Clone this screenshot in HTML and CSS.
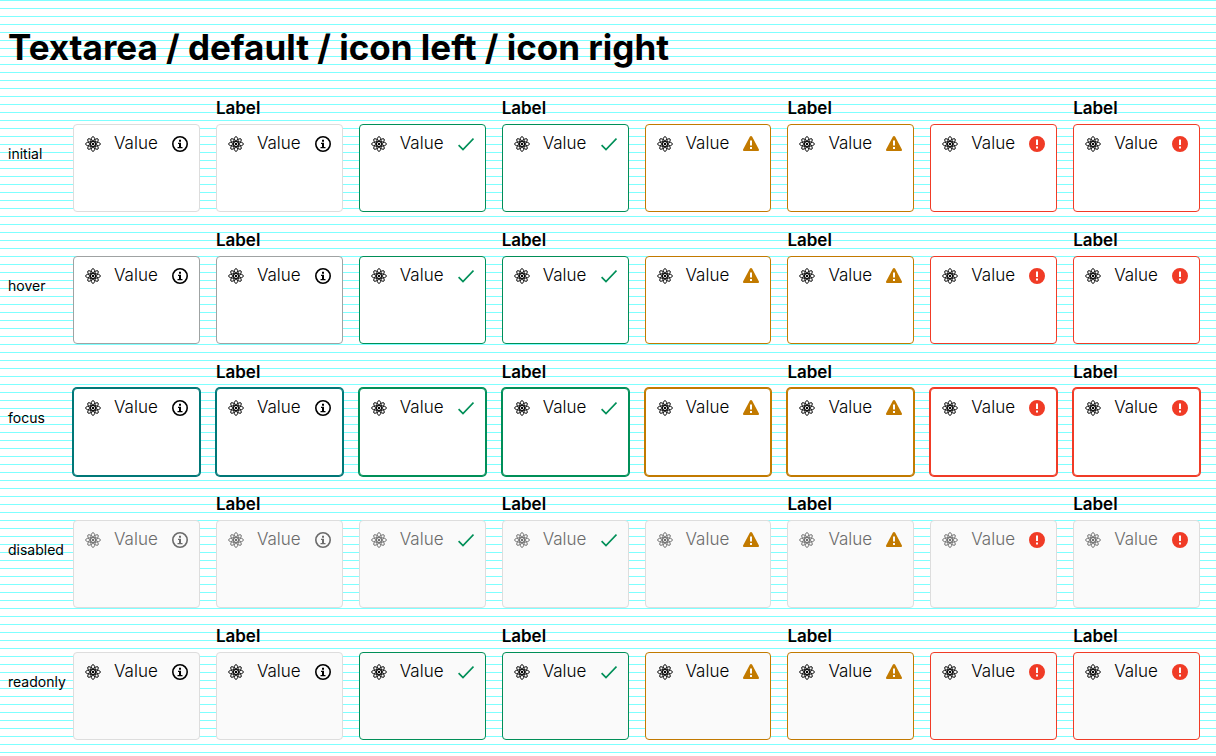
FILE: index.html
```html
<!DOCTYPE html>
<html lang="en">
<head>
  <meta charset="utf-8">
  <meta name="viewport" content="width=device-width, initial-scale=1">
  <title>Textarea / default / icon left / icon right</title>
  <link rel="stylesheet" href="styles.css">
</head>
<body>
  <svg class="sprite" aria-hidden="true">
    <symbol id="icon-atom" viewBox="0 0 16 16">
      <g fill="none" stroke="currentColor" stroke-width="0.9">
        <ellipse cx="8" cy="8" rx="7.5" ry="2.400"/>
        <ellipse cx="8" cy="8" rx="7.100" ry="2.400" transform="rotate(45 8 8)"/>
        <ellipse cx="8" cy="8" rx="7.5" ry="2.400" transform="rotate(90 8 8)"/>
        <ellipse cx="8" cy="8" rx="7.100" ry="2.400" transform="rotate(135 8 8)"/>
      </g>
      <circle cx="8" cy="8" r="1.2" fill="currentColor"/>
    </symbol>
    <symbol id="icon-info" viewBox="0 0 16 16">
      <circle cx="8" cy="8" r="7.2" fill="none" stroke="currentColor" stroke-width="1.6"/>
      <path fill="currentColor" d="M7 3.800h2v2H7zM6 6.800h3v4.200h1.500v1.200h-5V11H7V8H6z"/>
    </symbol>
    <symbol id="icon-success" viewBox="0 0 16 16">
      <path fill="none" stroke="currentColor" stroke-width="1.7" d="M.6 9.200 5 13.600 15.500 2.600"/>
    </symbol>
    <symbol id="icon-warning" viewBox="0 0 16 16">
      <path fill="currentColor" fill-rule="evenodd" d="M8 0c.5 0 .9.300 1.200.8l6.600 12.400c.5.900 0 1.900-1.100 1.900H1.300c-1.100 0-1.600-1-1.100-1.900L6.800.8C7.100.3 7.500 0 8 0zM7 4.500v5h2v-5zM7 11v2h2v-2z"/>
    </symbol>
    <symbol id="icon-error" viewBox="0 0 16 16">
      <path fill="currentColor" fill-rule="evenodd" d="M8 0a8 8 0 1 1 0 16A8 8 0 0 1 8 0zM7 3.500v5.500h2V3.500zM7 10.500v2h2v-2z"/>
    </symbol>
  </svg>

  <main class="page">
    <h1 class="title">Textarea / default / icon left / icon right</h1>
    <div class="matrix" id="matrix"></div>
  </main>
  <script src="matrix.js"></script>
</body>
</html>
```

FILE: styles.css
```css
* {
  box-sizing: border-box;
}

body {
  margin: 0;
  min-height: 100vh;
  color: #000;
  background: #fff repeating-linear-gradient(#7fffff 0 1px, #fff 1px 8px);
  font-family: Inter, "Liberation Sans", sans-serif;
  font-size: 17px;
  line-height: 24px;
}

.sprite {
  display: none;
}

.page {
  padding: 24px 16px 16px 8px;
}

.title {
  margin: 0 0 26px;
  font-size: 35px;
  font-weight: 700;
  line-height: 46px;
}

.matrix {
  display: grid;
  gap: 16px;
}

.row {
  display: flex;
  align-items: center;
}

.state {
  flex: none;
  width: 65px;
  font-size: 14px;
}

.fields {
  flex: 1;
  display: grid;
  grid-template-columns: repeat(8, minmax(0, 1fr));
  gap: 16px;
  align-items: end;
}

.label {
  display: block;
  margin-bottom: 4px;
  font-weight: 600;
}

.control {
  display: flex;
  align-items: flex-start;
  padding: 6px 11px 8px;
  border: 1px solid var(--edge);
  border-radius: 4px;
  background: #fff;
  --edge: #ddd;
}

.icon {
  flex: none;
  width: 16px;
  height: 16px;
  margin-top: 5px;
}

.value {
  flex: 1;
  min-width: 0;
  margin: 0;
  padding: 0 0 0 13px;
  border: 0;
  outline: 0;
  resize: none;
  overflow: hidden;
  background: transparent;
  color: inherit;
  font: inherit;
  font-weight: 300;
}

.info-mark { color: inherit; }
.success-mark { color: #008f58; }
.warning-mark { color: #c27a00; }
.error-mark { color: #f03b26; }

.hover .control { --edge: #9fa3a3; }
.focus .control { --edge: #007777; }

.row .success { --edge: #008f58; }
.row .warning { --edge: #c27a00; }
.row .error { --edge: #f03b26; }

.focus .control {
  box-shadow: 0 0 0 1px var(--edge);
}

.readonly .control {
  background: #fafafa;
}

.disabled .control {
  --edge: #ddd;
  background: #fafafa;
  color: #6b6b6b;
}
```

FILE: matrix.js
```javascript
const states = ["initial", "hover", "focus", "disabled", "readonly"];
const kinds = ["info", "success", "warning", "error"];

function icon(name, extra = "") {
  return `<svg class="icon ${extra}" aria-hidden="true"><use href="#icon-${name}"/></svg>`;
}

function field(state, kind, labelled) {
  const id = `${state}-${kind}`;
  const label = labelled ? `<label class="label" for="${id}">Label</label>` : "";
  const name = labelled ? `id="${id}"` : `aria-label="${state} ${kind}"`;
  const mode = state === "disabled" || state === "readonly" ? state : "";
  return `<div class="field">${label}
    <div class="control ${kind}">
      ${icon("atom")}
      <textarea class="value" rows="3" ${name} ${mode}>Value</textarea>
      ${icon(kind, `${kind}-mark`)}
    </div>
  </div>`;
}

document.getElementById("matrix").innerHTML = states.map((state) => `
  <section class="row ${state}">
    <span class="state">${state}</span>
    <div class="fields">
      ${kinds.map((kind) => field(state, kind, false) + field(state, kind, true)).join("")}
    </div>
  </section>`).join("");
```
